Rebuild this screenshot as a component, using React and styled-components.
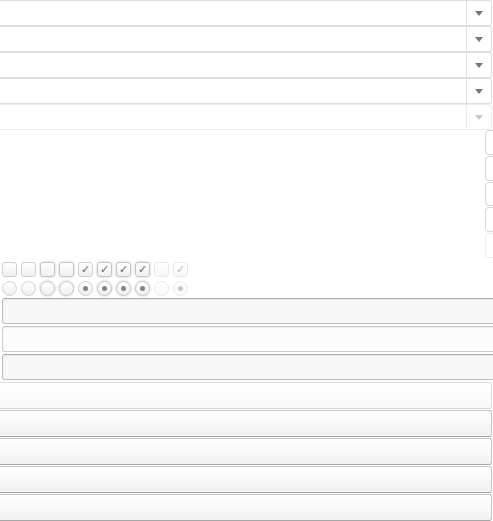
import React from "react";
import styled, { createGlobalStyle, css } from "styled-components";

const Global = createGlobalStyle`
  html, body { margin: 0; padding: 0; background: #fff; overflow: hidden; }
  body { font-family: "Liberation Sans", Arial, sans-serif; width: 493px; height: 521px; }
`;

const Page = styled.div`
  width: 493px;
  display: flex;
  flex-direction: column;
  overflow: hidden;
`;

const Select = styled.div`
  box-sizing: border-box;
  height: 26px;
  width: 497px;
  margin-left: -5px;
  display: flex;
  border: 1px solid ${(p) => (p.$disabled ? "#ececec" : "#dedede")};
  border-radius: 0 3px 3px 0;
  background: #fff;
`;

const SelectValue = styled.div`
  flex: 1;
`;

const SelectArrow = styled.div`
  width: 24px;
  border-left: 1px solid ${(p) => (p.$disabled ? "#ececec" : "#e2e2e2")};
  display: flex;
  align-items: center;
  justify-content: center;
  &::after {
    content: "";
    width: 0;
    height: 0;
    border-left: 4px solid transparent;
    border-right: 4px solid transparent;
    border-top: 5px solid ${(p) => (p.$disabled ? "#c8c8c8" : "#777777")};
    margin-top: 1px;
  }
`;

const Area = styled.div`
  height: 128px;
  display: flex;
  justify-content: flex-end;
`;

const Stubs = styled.div`
  width: 8px;
  display: flex;
  flex-direction: column;
  gap: 1px;
`;

const Stub = styled.div`
  box-sizing: border-box;
  height: 25px;
  width: 20px;
  border: 1px solid ${(p) => (p.$disabled ? "#eeeeee" : "#d6d6d6")};
  border-radius: 4px 0 0 4px;
  background: #fff;
`;

const ToggleRow = styled.div`
  display: flex;
  gap: 4px;
  padding-left: 2px;
  margin-top: ${(p) => p.$mt}px;
`;

const toggleBase = css`
  box-sizing: border-box;
  width: 15px;
  height: 15px;
  border: 1px solid #cfcfcf;
  background: linear-gradient(#ffffff, #efefef);
  display: flex;
  align-items: center;
  justify-content: center;
  ${(p) => p.$hover && css`
    box-shadow: 0 0 3px rgba(0, 0, 0, 0.2);
    border-color: #c4c4c4;
  `}
  ${(p) => p.$disabled && css`
    opacity: 0.45;
  `}
`;

const Check = styled.div`
  ${toggleBase}
  border-radius: 3px;
  color: #666;
  font-family: "DejaVu Sans", sans-serif;
  font-size: 11px;
  line-height: 1;
`;

const Radio = styled.div`
  ${toggleBase}
  border-radius: 50%;
  &::after {
    content: "";
    display: ${(p) => (p.$on ? "block" : "none")};
    width: 5px;
    height: 5px;
    border-radius: 50%;
    background: #858585;
  }
`;

const Inputs = styled.div`
  display: flex;
  flex-direction: column;
  gap: 2px;
  margin-top: 2px;
  padding-left: 2px;
`;

const Input = styled.div`
  box-sizing: border-box;
  height: 26px;
  width: 520px;
  border: 1px solid ${(p) => (p.$focus ? "#cdcdcd" : "#bdbdbd")};
  border-top-color: ${(p) => (p.$focus ? "#c0c0c0" : "#a9a9a9")};
  border-radius: 3px;
  background: ${(p) => (p.$focus ? "#fcfcfc" : "#f7f7f7")};
  box-shadow: inset 0 1px 2px rgba(0, 0, 0, 0.06);
`;

const Buttons = styled.div`
  display: flex;
  flex-direction: column;
  gap: 1px;
  margin-top: 2px;
`;

const Button = styled.div`
  box-sizing: border-box;
  height: 27px;
  width: 497px;
  margin-left: -5px;
  border: 1px solid ${(p) => (p.$disabled ? "#dcdcdc" : "#c4c4c4")};
  border-bottom-color: ${(p) => (p.$disabled ? "#d2d2d2" : "#a6a6a6")};
  border-radius: 3px;
  background: ${(p) =>
    p.$disabled ? "linear-gradient(#ffffff, #f8f8f8)" : "linear-gradient(#ffffff, #f1f1f1)"};
`;

const checks = [
  {}, {}, { hover: true }, { hover: true },
  { on: true }, { on: true, hover: true }, { on: true, hover: true }, { on: true, hover: true },
  { disabled: true }, { on: true, disabled: true },
];

export default function App() {
  return (
    <>
      <Global />
      <Page>
        {[0, 1, 2, 3, 4].map((i) => (
          <Select key={i} $disabled={i === 4}>
            <SelectValue />
            <SelectArrow $disabled={i === 4} />
          </Select>
        ))}
        <Area>
          <Stubs>
            {[0, 1, 2, 3, 4].map((i) => (
              <Stub key={i} $disabled={i === 4} />
            ))}
          </Stubs>
        </Area>
        <ToggleRow $mt={4}>
          {checks.map((c, i) => (
            <Check key={i} $hover={c.hover} $disabled={c.disabled}>
              {c.on ? "✓" : ""}
            </Check>
          ))}
        </ToggleRow>
        <ToggleRow $mt={4}>
          {checks.map((c, i) => (
            <Radio key={i} $hover={c.hover} $disabled={c.disabled} $on={c.on} />
          ))}
        </ToggleRow>
        <Inputs>
          <Input />
          <Input $focus />
          <Input />
        </Inputs>
        <Buttons>
          <Button $disabled />
          <Button />
          <Button />
          <Button />
          <Button />
        </Buttons>
      </Page>
    </>
  );
}
